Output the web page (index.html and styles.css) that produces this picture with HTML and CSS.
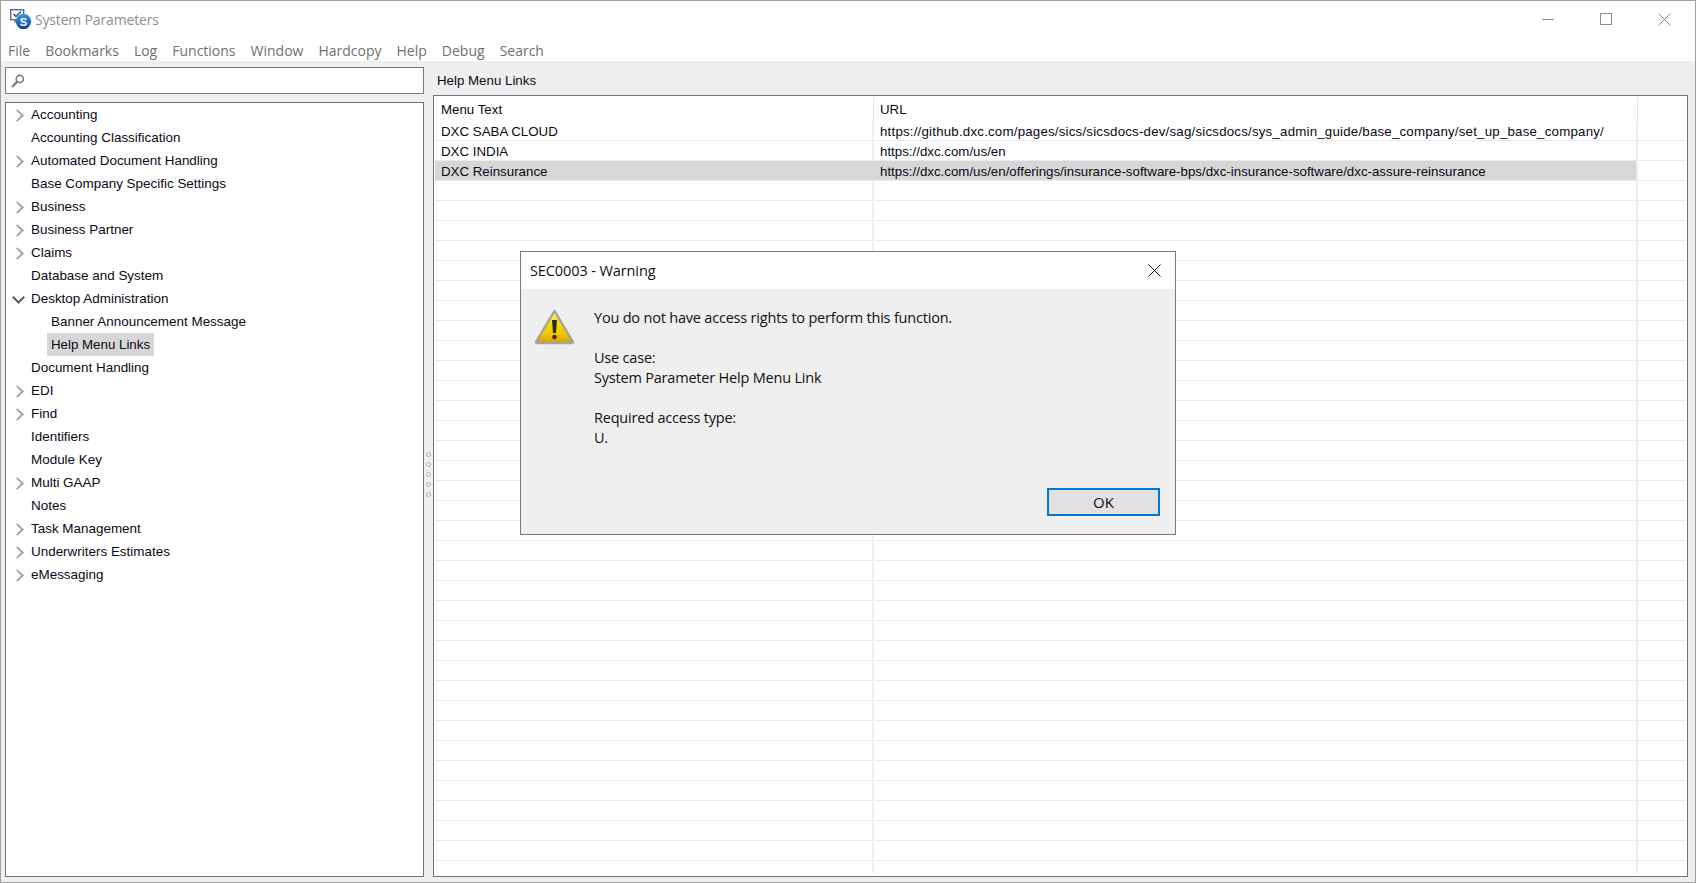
FILE: index.html
```html
<!DOCTYPE html>
<html lang="en">
<head>
<meta charset="utf-8">
<title>System Parameters</title>
<link rel="stylesheet" href="styles.css">
</head>
<body>
<div class="window">
  <header class="titlebar">
    <svg class="app-icon" viewBox="0 0 22 22" width="22" height="22">
      <defs><linearGradient id="bl" x1="0" y1="0" x2="0" y2="1"><stop offset="0" stop-color="#3f9ae8"/><stop offset="1" stop-color="#0b3f96"/></linearGradient></defs>
      <rect x=".7" y="1.7" width="13" height="10" fill="#fff" stroke="#5b6b85" stroke-width="1.4"/>
      <path d="M3.5 6l2.5 2.5 5-5" fill="none" stroke="#33507c" stroke-width="1.5"/>
      <rect x="4" y="12" width="7" height="2.5" fill="#7d8798"/>
      <circle cx="13.5" cy="13.5" r="7.7" fill="url(#bl)"/>
      <text class="app-s" x="13.5" y="17.5" text-anchor="middle">S</text>
    </svg>
    <span class="title">System Parameters</span>
    <div class="controls">
      <span class="ctl-min"></span>
      <span class="ctl-max"></span>
      <svg class="ctl-close" viewBox="0 0 13 13" width="13" height="13"><path d="M.5.5l12 12M12.5.5l-12 12" stroke="#8c8c8c" fill="none"/></svg>
    </div>
  </header>
  <nav class="menubar">
    <span>File</span><span>Bookmarks</span><span>Log</span><span>Functions</span><span>Window</span><span>Hardcopy</span><span>Help</span><span>Debug</span><span>Search</span>
  </nav>
  <main class="content">
    <aside class="left">
      <div class="search">
        <svg viewBox="0 0 14 14" width="14" height="14"><circle cx="8.8" cy="5" r="3.6" fill="none" stroke="#7d7d7d" stroke-width="1.6"/><path d="M6.3 7.7L1 13" stroke="#7d7d7d" stroke-width="2.4"/></svg>
      </div>
      <div class="tree">
        <div class="node"><i class="chev"></i>Accounting</div>
        <div class="node"><i class="none"></i>Accounting Classification</div>
        <div class="node"><i class="chev"></i>Automated Document Handling</div>
        <div class="node"><i class="none"></i>Base Company Specific Settings</div>
        <div class="node"><i class="chev"></i>Business</div>
        <div class="node"><i class="chev"></i>Business Partner</div>
        <div class="node"><i class="chev"></i>Claims</div>
        <div class="node"><i class="none"></i>Database and System</div>
        <div class="node"><i class="chev open"></i>Desktop Administration</div>
        <div class="node child">Banner Announcement Message</div>
        <div class="node child"><span class="selected">Help Menu Links</span></div>
        <div class="node"><i class="none"></i>Document Handling</div>
        <div class="node"><i class="chev"></i>EDI</div>
        <div class="node"><i class="chev"></i>Find</div>
        <div class="node"><i class="none"></i>Identifiers</div>
        <div class="node"><i class="none"></i>Module Key</div>
        <div class="node"><i class="chev"></i>Multi GAAP</div>
        <div class="node"><i class="none"></i>Notes</div>
        <div class="node"><i class="chev"></i>Task Management</div>
        <div class="node"><i class="chev"></i>Underwriters Estimates</div>
        <div class="node"><i class="chev"></i>eMessaging</div>
      </div>
    </aside>
    <div class="sash"><b></b><b></b><b></b><b></b><b></b></div>
    <section class="right">
      <div class="panel-title">Help Menu Links</div>
      <div class="table">
        <div class="row head"><div class="c1">Menu Text</div><div class="c2">URL</div><div class="c3"></div></div>
        <div class="row"><div class="c1">DXC SABA CLOUD</div><div class="c2 wide">https://github.dxc.com/pages/sics/sicsdocs-dev/sag/sicsdocs/sys_admin_guide/base_company/set_up_base_company/</div><div class="c3"></div></div>
        <div class="row"><div class="c1">DXC INDIA</div><div class="c2">https://dxc.com/us/en</div><div class="c3"></div></div>
        <div class="row sel"><div class="c1">DXC Reinsurance</div><div class="c2">https://dxc.com/us/en/offerings/insurance-software-bps/dxc-insurance-software/dxc-assure-reinsurance</div><div class="c3"></div></div>
        <div class="rest"></div>
      </div>
    </section>
  </main>
</div>
<div class="dialog">
  <div class="dlg-title"><span>SEC0003 - Warning</span>
    <svg viewBox="0 0 13 13" width="13" height="13"><path d="M.5.5l12 12M12.5.5l-12 12" stroke="#111" fill="none"/></svg>
  </div>
  <div class="dlg-body">
    <svg class="warn" viewBox="0 0 40 36" width="40" height="36">
      <defs><linearGradient id="wg" x1="0" y1="0" x2="0" y2="1"><stop offset="0" stop-color="#fdf6b0"/><stop offset=".35" stop-color="#f8e000"/><stop offset=".75" stop-color="#efc400"/><stop offset="1" stop-color="#d99e00"/></linearGradient></defs>
      <path d="M19.5 2L37.8 32.6a.8.8 0 0 1-.7 1.4H1.9a.8.8 0 0 1-.7-1.4z" fill="url(#wg)" stroke="#a4a4a4" stroke-width="2.4" stroke-linejoin="round"/>
      <path d="M17 11h5l-1 13h-3z" fill="#2a2a2a"/>
      <circle cx="19.5" cy="28" r="2.3" fill="#2a2a2a"/>
    </svg>
    <div class="msg">
      <p>You do not have access rights to perform this function.</p>
      <p class="gap">Use case:</p>
      <p>System Parameter Help Menu Link</p>
      <p class="gap">Required access type:</p>
      <p>U.</p>
    </div>
  </div>
  <div class="dlg-foot"><button class="ok">OK</button></div>
</div>
</body>
</html>
```
FILE: styles.css
```css
* { box-sizing: border-box; }
html, body { margin: 0; height: 100%; overflow: hidden; background: #fff; }
body { font-family: "Liberation Sans", Arial, sans-serif; font-size: 13.3px; color: #0a0a14; }
.window { position: relative; height: 883px; display: flex; flex-direction: column; border: 1px solid #a0a0a0; background: #efefef; }
.titlebar { height: 36px; flex: none; background: #fff; display: flex; align-items: center; padding-left: 9px; }
.app-icon { flex: none; }
.app-s { font: bold 11px "Liberation Sans", sans-serif; fill: #fff; }
.title { margin-left: 3px; font: 14px "Open Sans", sans-serif; letter-spacing: -.17px; color: #8f8f8f; }
.controls { margin-left: auto; display: flex; align-items: center; height: 100%; padding-right: 24px; gap: 46px; }
.ctl-min { width: 12px; height: 1px; background: #8c8c8c; }
.ctl-max { width: 12px; height: 12px; border: 1px solid #8c8c8c; }
.ctl-close { display: block; }
.menubar { height: 24px; flex: none; padding: 2px 0 0 7px; background: #fff; display: flex; align-items: center; gap: 15px; font: 14px "Open Sans", sans-serif; color: #707070; }
.content { flex: 1; display: flex; min-height: 0; padding: 6px 7px 5px 4px; }
.left { width: 419px; flex: none; display: flex; flex-direction: column; gap: 8px; }
.search { height: 27px; flex: none; background: #fff; border: 1px solid #7a7a7a; padding: 6px 0 0 5px; }
.search svg { display: block; }
.tree { flex: 1; background: #fff; border: 1px solid #6f6f6f; font-size: 13.45px; }
.node { height: 23px; display: flex; align-items: center; padding-left: 20px; white-space: nowrap; }
.node.child { padding-left: 45px; }
.node i { flex: 0 0 5px; }
.selected { background: #d7d7d7; margin-left: -4px; padding: 0 4px; height: 23px; line-height: 23px; font-size: 13.3px; }
.chev { position: relative; width: 5px; height: 23px; }
.chev::before { content: ""; position: absolute; left: -13px; top: 8px; width: 7px; height: 7px; border: solid #a6a6a6; border-width: 2px 2px 0 0; transform: rotate(45deg); }
.chev.open::before { left: -12px; top: 6px; border-color: #555; transform: rotate(135deg); }
.sash { width: 9px; flex: none; display: flex; flex-direction: column; align-items: center; gap: 5px; padding-top: 385px; }
.sash b { width: 5px; height: 5px; border: 1px solid #b0b0b0; border-radius: 50%; background: #f5f5f5; }
.right { flex: 1; min-width: 0; display: flex; flex-direction: column; }
.panel-title { height: 28px; flex: none; line-height: 28px; padding-left: 4px; }
.table { flex: 1; background: #fff; border: 1px solid #6f7480; display: flex; flex-direction: column; padding: 1px 1px 3px 1px; min-height: 0; }
.row { display: flex; height: 20px; flex: none; border-bottom: 1px solid #ececec; line-height: 21px; }
.row.head { height: 24px; border-bottom: 0; line-height: 26px; }
.c1 { width: 439px; flex: none; padding-left: 6px; border-right: 2px solid #edf1f8; }
.c2 { width: 764px; flex: none; padding-left: 6px; border-right: 2px solid #e8edf6; white-space: nowrap; overflow: hidden; }
.c2.wide { letter-spacing: .2px; }
.c3 { flex: 1; }
.head .c1, .head .c2 { border-right: 1px solid #e4e4e4; }
.row.sel .c1, .row.sel .c2 { background: #d7d7d7; background-clip: padding-box; }
.row.sel .c1 { background-clip: border-box; border-right-color: #d7d7d7; }
.rest { flex: 1; background-color: #fff; background-image:
  linear-gradient(to right, transparent 437px, #edf1f8 437px, #edf1f8 439px, transparent 439px, transparent 1201px, #e8edf6 1201px, #e8edf6 1203px, transparent 1203px),
  repeating-linear-gradient(to bottom, #fff 0, #fff 19px, #ececec 19px, #ececec 20px); }
.dialog { position: absolute; left: 520px; top: 251px; width: 656px; height: 284px; background: #efefef; border: 1px solid #7b7b7b; display: flex; flex-direction: column; }
.dlg-title { height: 37px; flex: none; background: #fff; display: flex; align-items: center; justify-content: space-between; padding: 0 14px 0 9px; font: 14.5px "Open Sans", sans-serif; letter-spacing: -.1px; color: #111; }
.dlg-body { flex: 1; display: flex; padding: 19px 0 0 14px; min-height: 0; }
.warn { flex: none; margin-top: 1px; }
.msg { margin-left: 19px; font: 14.5px/20px "Open Sans", sans-serif; letter-spacing: -.2px; color: #111; }
.msg p { margin: 0; }
.msg p.gap { margin-top: 20px; }
.dlg-foot { flex: none; display: flex; justify-content: flex-end; padding: 0 15px 18px 0; }
.ok { width: 113px; height: 28px; background: #e1e1e1; border: 2px solid #0078d7; font: 15px "Open Sans", sans-serif; color: #111; padding: 0; }
```
